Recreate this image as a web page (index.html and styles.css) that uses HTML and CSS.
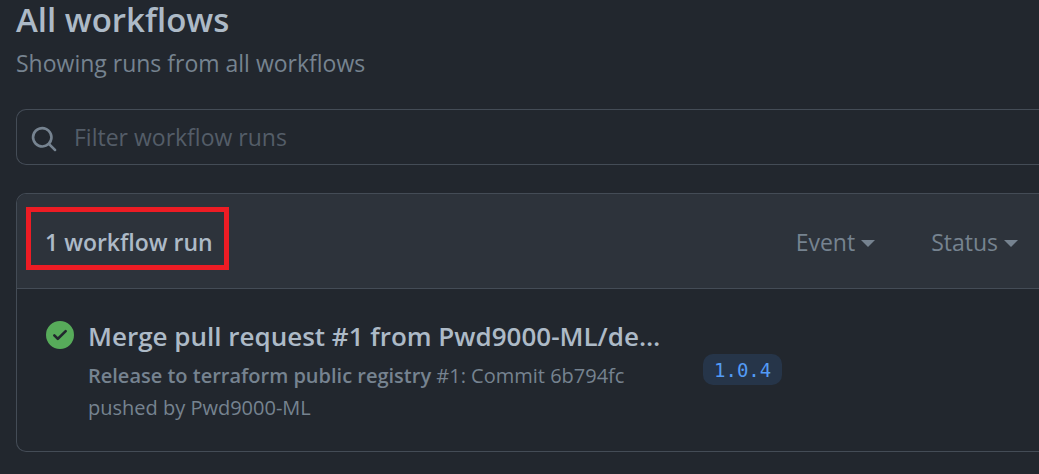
FILE: index.html
```html
<!DOCTYPE html>
<html lang="en">
<head>
<meta charset="utf-8">
<meta name="viewport" content="width=device-width, initial-scale=1">
<title>All workflows</title>
<link rel="stylesheet" href="styles.css">
</head>
<body>
<main class="page">
  <header class="page-header">
    <h1 class="title">All workflows</h1>
    <p class="subtitle">Showing runs from all workflows</p>
  </header>
  <form class="search" role="search">
    <svg class="search-icon" viewBox="0 0 16 16" aria-hidden="true"><path d="M11.5 7a4.5 4.5 0 1 1-9 0 4.5 4.5 0 0 1 9 0Zm-.82 4.74a6 6 0 1 1 1.06-1.06l3.04 3.04a.75.75 0 1 1-1.06 1.06l-3.04-3.04Z" fill-rule="evenodd"/></svg>
    <input class="search-input" type="text" aria-label="Filter workflow runs" placeholder="Filter workflow runs">
  </form>
  <section class="runs">
    <div class="runs-header">
      <h2 class="count">1 workflow run</h2>
      <div class="filters">
        <button class="filter" type="button">Event<span class="caret"></span></button>
        <button class="filter" type="button">Status<span class="caret"></span></button>
      </div>
    </div>
    <article class="run">
      <svg class="status-icon" viewBox="0 0 16 16" role="img" aria-label="Completed successfully"><path d="M8 16A8 8 0 1 0 8 0a8 8 0 0 0 0 16Zm3.78-9.72a.75.75 0 0 0-1.06-1.06L6.75 9.19 5.28 7.72a.75.75 0 0 0-1.06 1.06l2 2a.75.75 0 0 0 1.06 0l4.5-4.5Z" fill-rule="evenodd"/></svg>
      <div class="run-text">
        <a class="run-title" href="#">Merge pull request #1 from Pwd9000-ML/de…</a>
        <p class="run-meta"><strong class="workflow">Release to terraform public registry</strong> #1: Commit 6b794fc pushed by Pwd9000-ML</p>
      </div>
      <a class="branch" href="#">1.0.4</a>
    </article>
  </section>
</main>
</body>
</html>
```
FILE: styles.css
```css
* {
  box-sizing: border-box;
}

body {
  margin: 0;
  overflow-x: hidden;
  background: #22272e;
  color: #adbac7;
  font-family: "Open Sans", "Noto Sans", sans-serif;
  font-size: 23px;
  line-height: 32px;
}

h1, h2, p {
  margin: 0;
}

.page {
  padding-left: 16px;
}

.title {
  font-size: 33px;
  font-weight: 600;
  line-height: 40px;
}

.subtitle {
  padding-top: 7px;
  color: #768390;
}

.search {
  display: flex;
  align-items: center;
  gap: 16px;
  height: 56px;
  margin-top: 30px;
  padding-left: 13px;
  border: 1px solid #444c56;
  border-right: 0;
  border-radius: 10px 0 0 10px;
}

.search-icon {
  flex: none;
  width: 28px;
  height: 28px;
  margin-top: 3px;
  fill: #768390;
}

.search-input {
  flex: 1;
  min-width: 0;
  padding: 0;
  border: 0;
  outline: 0;
  background: none;
  color: #adbac7;
  font: inherit;
}

.search-input::placeholder {
  color: #545d68;
  opacity: 1;
}

.runs {
  margin-top: 28px;
  border: 1px solid #444c56;
  border-right: 0;
  border-radius: 10px 0 0 10px;
}

.runs-header {
  display: flex;
  align-items: center;
  justify-content: space-between;
  padding: 13px 21px 18px 9px;
  border-bottom: 1px solid #444c56;
  border-radius: 9px 0 0 0;
  background: #2d333b;
}

.count {
  padding: 15px 11px 7px 14px;
  border: 5px solid #ed1c24;
  font-size: 23px;
  font-weight: 600;
  line-height: 31px;
}

.filters {
  display: flex;
  gap: 56px;
  padding-top: 6px;
}

.filter {
  display: flex;
  align-items: center;
  gap: 6px;
  padding: 0;
  border: 0;
  background: none;
  color: #768390;
  font: inherit;
  cursor: pointer;
}

.caret {
  margin-top: 4px;
  border: 7px solid transparent;
  border-top-color: #768390;
  border-bottom: 0;
}

.run {
  display: flex;
  align-items: flex-start;
  padding: 30px 28px 27px 29px;
}

.status-icon {
  flex: none;
  width: 28px;
  height: 28px;
  margin: 2px 14px 0 0;
  fill: #57ab5a;
}

.run-text {
  flex: none;
  width: 600px;
}

.run-title {
  display: block;
  color: #adbac7;
  font-size: 26px;
  font-weight: 600;
  line-height: 34px;
  text-decoration: none;
  white-space: nowrap;
}

.run-meta {
  padding: 7px 60px 0 0;
  color: #768390;
  font-size: 20px;
}

.workflow {
  font-weight: 600;
}

.branch {
  margin: 35px 0 0 15px;
  padding: 2px 11px 0;
  border-radius: 10px;
  background: #263549;
  color: #539bf5;
  font-family: "DejaVu Sans Mono", monospace;
  font-size: 19px;
  line-height: 29px;
  text-decoration: none;
}
```
